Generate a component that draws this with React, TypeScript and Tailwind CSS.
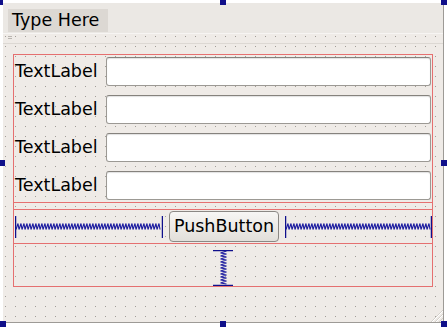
import React from 'react';

const font = { fontFamily: '"DejaVu Sans", "Liberation Sans", sans-serif' };

function HSpacer({ width }: { width: number }) {
  const top = 7.5;
  const bot = 13.5;
  let d = `M1 ${bot}`;
  for (let x = 1; x + 3 <= width - 1; x += 3) {
    d += ` L${x + 2} ${top} L${x + 3} ${bot}`;
  }
  return (
    <svg width={width} height={22} className="block shrink-0">
      <line x1={0.5} y1={0} x2={0.5} y2={22} stroke="#10108c" strokeWidth={1.5} />
      <line x1={width - 0.5} y1={0} x2={width - 0.5} y2={22} stroke="#10108c" strokeWidth={1.5} />
      <path d={d} fill="none" stroke="#1c1ca0" strokeWidth={1.1} />
    </svg>
  );
}

function VSpacer() {
  const left = 7.5;
  const right = 13.5;
  let d = `M${right} 1`;
  for (let y = 1; y + 3 <= 35; y += 3) {
    d += ` L${left} ${y + 2} L${right} ${y + 3}`;
  }
  return (
    <svg width={20} height={36} className="block">
      <line x1={0} y1={0.5} x2={20} y2={0.5} stroke="#10108c" strokeWidth={1.5} />
      <line x1={0} y1={35.5} x2={20} y2={35.5} stroke="#10108c" strokeWidth={1.5} />
      <path d={d} fill="none" stroke="#1c1ca0" strokeWidth={1.1} />
    </svg>
  );
}

function Row() {
  return (
    <div className="flex h-[29px] items-center">
      <div className="w-[92px] pl-[1px] text-[17.5px] text-black">TextLabel</div>
      <div className="h-[29px] w-[325px] rounded-[3px] border border-[#9c9994] border-t-[#85827d] bg-white shadow-[inset_0_1px_1px_rgba(0,0,0,0.12)]" />
    </div>
  );
}

export default function App() {
  const handle = 'absolute h-[6px] w-[6px] bg-[#10108a]';
  return (
    <div className="relative h-[327px] w-[447px] overflow-hidden bg-white pl-[3px] pt-[3px]" style={font}>
      <div className="relative flex h-[320px] w-[441px] flex-col border-b border-r border-[#9d9a96] bg-[#efebe7]">
        {/* menu bar */}
        <div className="flex h-[31px] shrink-0 items-start border-b border-[#f7f5f3] bg-[#ebe8e4] px-[5px] pt-[6px]">
          <div className="flex h-[23px] w-[100px] items-center bg-[#dcd8d3] pl-[4px] text-[17.5px] text-black">
            Type Here
          </div>
        </div>

        {/* central widget */}
        <div className="relative flex-1 bg-[radial-gradient(circle_at_0.5px_0.5px,#a29e98_0.7px,transparent_0.8px)] bg-[length:10px_10px] bg-[position:2px_2px] pl-[10px] pt-[20px]">
          <div className="absolute left-[5px] top-[2px] flex flex-col gap-[1px]">
            <div className="h-px w-[4px] bg-[#b9b5b0]" />
            <div className="h-px w-[4px] bg-[#b9b5b0]" />
          </div>
          <div className="absolute left-0 right-0 top-[9px] h-px bg-[#dcd8d3]" />

          {/* vertical layout */}
          <div className="relative flex h-[233px] w-[420px] flex-col border border-[#e57070]">
            {/* form layout */}
            <div className="flex h-[148px] flex-col gap-[9px] border-b border-[#e57070] pt-[2px]">
              <Row />
              <Row />
              <Row />
              <Row />
            </div>

            {/* horizontal layout */}
            <div className="mt-[6px] flex h-[35px] items-center gap-[6px] border-y border-[#e57070] pl-[1px]">
              <HSpacer width={148} />
              <div className="flex h-[31px] w-[110px] shrink-0 items-center justify-center rounded-[4px] border border-[#8b8884] bg-gradient-to-b from-[#f7f6f4] to-[#e2dfda] text-[17.5px] text-black">
                PushButton
              </div>
              <HSpacer width={147} />
            </div>

            {/* vertical spacer */}
            <div className="flex flex-1 justify-center pt-[6px]">
              <VSpacer />
            </div>
          </div>
        </div>

        {/* size grip */}
        <svg width={16} height={16} className="absolute bottom-0 right-0">
          <line x1={4} y1={16} x2={16} y2={4} stroke="#d4d0ca" />
          <line x1={8} y1={16} x2={16} y2={8} stroke="#d4d0ca" />
          <line x1={12} y1={16} x2={16} y2={12} stroke="#d4d0ca" />
          <line x1={5} y1={16} x2={16} y2={5} stroke="#ffffff" />
          <line x1={9} y1={16} x2={16} y2={9} stroke="#ffffff" />
        </svg>
      </div>

      {/* selection handles */}
      <div className={`${handle} -left-[3px] -top-[1px]`} />
      <div className={`${handle} left-[220px] -top-[1px]`} />
      <div className={`${handle} left-[441px] -top-[1px]`} />
      <div className={`${handle} -left-[1px] top-[160px]`} />
      <div className={`${handle} left-[441px] top-[160px]`} />
      <div className={`${handle} left-0 top-[321px]`} />
      <div className={`${handle} left-[220px] top-[321px]`} />
      <div className={`${handle} left-[441px] top-[321px]`} />
    </div>
  );
}
